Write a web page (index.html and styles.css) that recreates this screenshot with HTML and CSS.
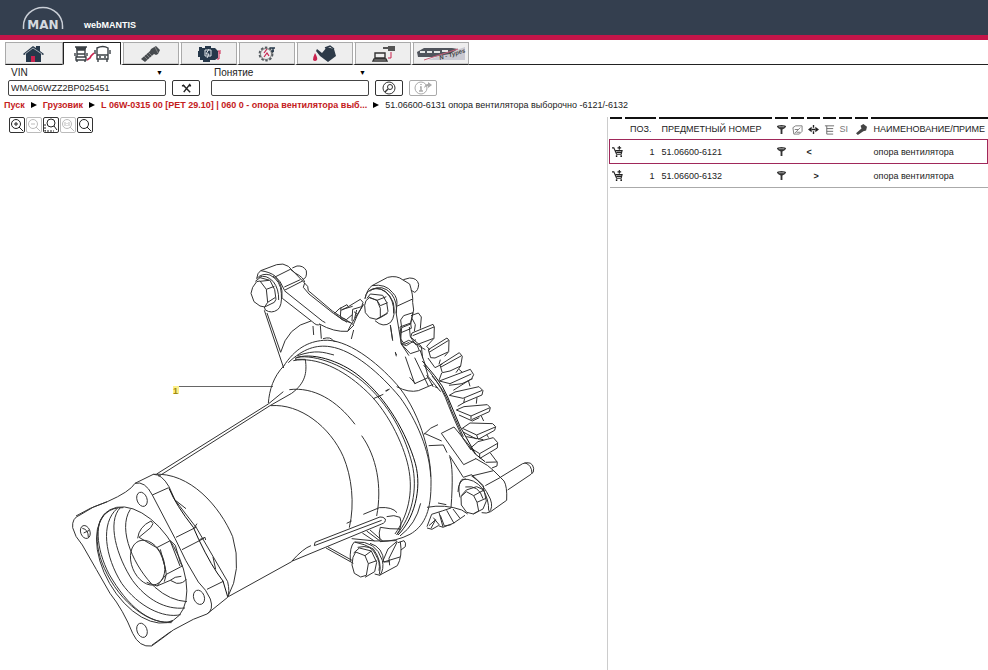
FILE: index.html
```html
<!DOCTYPE html>
<html lang="ru">
<head>
<meta charset="utf-8">
<title>webMANTIS</title>
<link rel="stylesheet" href="styles.css">
</head>
<body>
<header class="brand">
  <svg class="logo" viewBox="0 0 42 25" role="img" aria-label="MAN">
    <path d="M1.500 23V20A19.500 18.500 0 0 1 40.500 20V23" fill="none" stroke="#c9ced6" stroke-width="1.500"/>
    <text x="21" y="23" text-anchor="middle">MAN</text>
  </svg>
  <span class="product">webMANTIS</span>
</header>

<nav class="tabs">
  <button class="tab" aria-label="Home"><svg viewBox="0 0 24 18"><path d="M1 9L11 1l3 2V1h4v5l4 3-1 1-2-1v8H4V9L2 10z" fill="#26384a"/><path d="M9 17v-6h4v6" fill="#c9234f"/><path d="M3 9l8-6 9 6" fill="none" stroke="#fff" stroke-width=".6"/></svg></button>
  <button class="tab active" aria-label="Vehicles"><svg class="wide" viewBox="0 0 38 18"><g fill="none" stroke="#3b4146" stroke-width="1.400"><path d="M2 2h12M3 3.500h10M4 5h8v7H4zM4 9h8M2 8v3M14 8v3M3 12h10v3H3zM4 15v2M12 15v2"/><path d="M24 3Q30 0 35 3v11H24zM24 10h11M22 5v4M37 5v4M25 14v3M34 14v3M26 12h2M31 12h2"/></g><path d="M14 15l3-2 1-2 3-3" stroke="#c9234f" stroke-width="1.700" fill="none"/></svg></button>
  <button class="tab" aria-label="Parts"><svg viewBox="0 0 24 18"><path d="M12 4l5-3 4 4-2 4-2 1-2-1-9 8-4-3 9-8z" fill="#474b4f"/><path d="M5 11l4 4M7 9l4 4M9 7l4 4M16 2l3 6" stroke="#aaa" stroke-width=".6"/></svg></button>
  <button class="tab" aria-label="Units"><svg viewBox="0 0 24 18"><path d="M2 2h3v1h3V1h6v2h4l3 3v7l-3 2h-5v2H6v-2H3v-3H1V6h1z" fill="#26384a"/><path d="M8 5h6v6H8zM12 4l-3 5h3l-2 4" fill="none" stroke="#dfe4e8"/><path d="M21 6h1v8h-2M23 5v4" stroke="#c9234f" fill="none"/></svg></button>
  <button class="tab" aria-label="Service"><svg viewBox="0 0 24 18"><circle cx="11" cy="9" r="6.500" fill="none" stroke="#555b60" stroke-width="1.800" stroke-dasharray="2.500 1.600"/><circle cx="11" cy="9" r="5.500" fill="none" stroke="#666" stroke-width=".8"/><path d="M12 4l-3 4M9 12l3-4 2 3" stroke="#c9234f" stroke-width="1.200" fill="none"/><path d="M15 3h5M16 6h3M18 3v4" stroke="#26384a" stroke-width="1.400"/></svg></button>
  <button class="tab" aria-label="Fluids"><svg viewBox="0 0 24 18"><path d="M4 4l5 4 5-6 7 2 2 7-8 6-8-6-4-5z" fill="#2d3a48"/><path d="M12 3l5-2 4 3" fill="none" stroke="#2d3a48" stroke-width="1.400"/><path d="M2 8q3 5 2 7-2 2-4 0 0-3 2-7z" fill="#c9234f"/></svg></button>
  <button class="tab" aria-label="Diagnostics"><svg viewBox="0 0 24 18"><path d="M4 8h10v5H4zM2 16l1-2h12l1 2z" fill="#eee" stroke="#333" stroke-width="1.400"/><path d="M12 2h5V1h7v5h-7V4h-5z" fill="#555"/><path d="M20 7v6h-3" fill="none" stroke="#c9234f"/></svg></button>
  <button class="tab" aria-label="N-Types"><svg class="bus" viewBox="0 0 50 16"><path d="M12 14L49 1v13z" fill="#c9c9d2"/><path d="M1 6L8 2h28l6 1-8 5-17 3H2z" fill="#50545c"/><path d="M4 6h5M11 6h5M18 6h6M26 5h6" stroke="#e6e6e6" stroke-width="2"/><path d="M8 14L42 3" stroke="#c9607a"/><text x="24" y="14" transform="rotate(-17 24 14)">N - Types</text></svg></button>
  <span class="tab-rest"></span>
</nav>

<form class="search">
  <div class="field">
    <label for="vin">VIN</label><span class="caret">▼</span>
    <input id="vin" type="text" value="WMA06WZZ2BP025451">
  </div>
  <button class="tool" type="button" aria-label="Clear"><svg class="clear" viewBox="0 0 12 12"><path d="M2 2l8 8M10 1L3 10M1 3h3M8 3h3" stroke="#222" stroke-width="1.600"/></svg></button>
  <div class="field second">
    <label for="term">Понятие</label><span class="caret">▼</span>
    <input id="term" type="text">
  </div>
  <button class="tool" type="button" aria-label="Search"><svg viewBox="0 0 14 14"><circle cx="7" cy="7" r="6" fill="none" stroke="#333"/><circle cx="8" cy="6" r="2.500" fill="none" stroke="#333"/><path d="M6 8l-3 3" stroke="#333" stroke-width="1.500"/></svg></button>
  <button class="tool" type="button" aria-label="Info" disabled><svg class="info" viewBox="0 0 18 14"><circle cx="7" cy="7" r="6" fill="none" stroke="#aaa"/><path d="M7 3v1M6 6h1v4M5 10h4" fill="none" stroke="#aaa" stroke-width="1.500"/><path d="M10 7q1-4 4-4V1l4 3-4 3V5q-2 0-4 2z" fill="#aaa"/></svg></button>
</form>

<nav class="crumbs">
  <a href="#">Пуск</a><i></i><a href="#">Грузовик</a><i></i><a href="#">L 06W-0315 00 [PET 29.10] | 060 0 - опора вентилятора выб...</a><i></i><span>51.06600-6131 опора вентилятора выборочно -6121/-6132</span>
</nav>

<main class="work">
  <section class="viewer">
    <div class="zoombar">
      <button aria-label="Zoom in"><svg viewBox="0 0 14 14"><circle cx="6" cy="6" r="4.500"/><path d="M9 9l4 4M4 6h4M6 4v4"/></svg></button>
      <button aria-label="Zoom out" disabled><svg viewBox="0 0 14 14"><circle cx="6" cy="6" r="4.500"/><path d="M9 9l4 4M4 6h4"/></svg></button>
      <button aria-label="Zoom area"><svg viewBox="0 0 14 14"><circle cx="7" cy="5" r="4"/><path d="M10 8l3 4"/><path d="M1 6v7h9" stroke-dasharray="2 1"/></svg></button>
      <button aria-label="Original size" disabled><svg viewBox="0 0 14 14"><circle cx="6" cy="6" r="4.500"/><path d="M9 9l4 4M4 4v4M6 5v1M6 7v1M8 4v4"/></svg></button>
      <button aria-label="Fit"><svg viewBox="0 0 14 14"><circle cx="6" cy="6" r="4.500"/><path d="M9 9l4 4"/></svg></button>
    </div>
    <svg class="drawing" viewBox="0 136 607 534" role="img" aria-label="опора вентилятора">
      <path class="leader" d="M178 386.500H273"/>
      <rect x="173" y="386" width="6" height="8" fill="#fdf08a"/>
      <text x="173" y="394">1</text>

      <!-- upper brackets and bolts -->
      <g transform="translate(240 250) scale(.3333)">
        <path d="M38 112L50 95 60 93 79 118 83 157 74 171 60 168 42 155 33 130zM46 94L60 83 90 91 104 119 108 148 103 157 74 171M60 94l27-3M79 118l24-9M83 157l22-14"/>
        <path d="M50 86Q66 68 90 75Q123 92 124 130Q127 168 113 179Q95 192 76 180L73 171M57 82Q78 72 100 95Q117 117 116 150M99 78Q130 95 126 145"/>
        <path d="M50 86Q52 68 62 62L110 44Q130 38 145 49L185 90 203 109 205 122 277 183Q310 205 333 219M62 62Q90 66 105 78Q122 92 133 120M105 81L151 58M151 58L167 70Q190 82 194 96M133 111L181 89M133 121L188 93M157 54L171 48Q190 46 199 62Q202 84 188 89M194 99L190 112 207 132"/>
        <path d="M127 145L218 216Q232 230 240 222M133 122L247 213 256 218M207 132L280 190 321 217M238 222Q282 247 323 244L333 224 371 163M333 219L340 224M323 244L342 225M340 224L351 198 369 165"/>
        <path d="M73 181L131 354M81 189L122 307Q142 230 213 213M219 228L221 255M241 226L244 266M341 240L334 267M249 266Q273 259 280 273L289 275"/>
        <path d="M283 191L297 177 321 164 325 170 361 148 369 157 365 170 338 178 336 213M303 172L301 202 319 209 337 194M287 193L306 209 331 218M305 179L338 169M342 185L352 193M325 170L304 181M350 180L344 205"/>
        <path d="M378 152L388 143 411 151 421 175 421 203 409 208 389 203 376 188 374 166z"/>
        <path d="M381 145L391 132 428 136 440 157 444 184 439 191 409 208M386 141l25 10 28-11M411 151L421 167 443 158M421 203l22-13"/>
        <path d="M375 146Q379 118 405 116Q441 112 460 158Q468 198 452 217Q430 235 405 212M389 124Q408 105 437 126Q463 148 461 190M394 119Q428 102 454 131Q474 158 468 190"/>
        <path d="M375 146Q381 118 396 107L443 82Q471 75 489 90L509 102Q520 135 518 157L521 180 512 218M396 107Q437 100 458 128Q475 144 470 169L518 147M470 169L469 192 484 282 507 317M490 89L509 84Q532 84 536 103Q535 122 524 127L512 120M451 225L458 272M466 306L469 319"/>
        <path d="M482 210L491 197 519 188 512 222 485 233zM485 234l-3 33 12 16 14-6M508 231L511 260 526 273"/>
      </g>

      <!-- gear rim, right lug and bolt -->
      <g transform="translate(370 290) scale(.3333)">
        <path d="M123 77L145 69 154 81 151 116M126 85L136 104 133 124M90 111L122 99 124 115 93 128zM90 120L94 162 109 167 138 149M94 162L121 191 148 182 140 162 116 151z"/>
        <path d="M126 129L189 103 193 111 192 145 170 169 180 180M126 129L122 142 138 165 191 145M128 137L192 111M166 179L145 167M133 151L154 169 158 205"/>
        <path d="M175 179L231 144 237 151 236 185 224 199M175 179L182 203 195 204 234 186M177 187L236 151M207 223L211 209M174 204L195 233 217 222"/>
        <path d="M210 225L268 188 277 199 272 228 258 248M210 225L217 248 240 243 272 228M213 231L275 197M267 238l10 9M215 249L207 271"/>
        <path d="M208 273L301 238 311 254 305 266 250 301M208 273L240 281 304 252M237 286L276 281 308 266M295 271l5 18"/>
        <path d="M238 316L255 306 327 290 339 302 336 315 281 338M238 316L279 325 337 301M281 338L284 325M263 349L285 336M321 322L319 341"/>
        <path d="M259 360L282 350 352 344 361 353 358 365 305 389M259 360L303 378 360 353M303 378V389M267 375L307 393 328 383M334 378L341 393"/>
        <path d="M277 415L300 399 368 401 377 410 374 421 325 448M277 415L320 435 376 411M320 435L324 447M281 427L319 447M350 434L356 443"/>
        <path d="M302 474L324 455 370 443 383 458 382 474 330 505M302 474L329 491 383 460M329 491V505M289 440L340 449M296 468L317 493M361 489L382 517 381 528 366 534M347 517L382 516"/>
        <path class="heavy" d="M157 213L194 257Q220 288 233 321L270 409 317 493 345 515"/>
        <path d="M161 226Q201 266 226 322Q243 368 278 444L303 480M164 223L175 260 212 305M186 258Q228 304 244 360L280 440M150 180L169 233M194 290l10 4M170 255l20 36"/>
        <path d="M106 200L134 281 174 263M119 262L137 282M134 203L175 288M80 290Q116 309 145 302L190 283M48 304L59 297M76 189L80 195M61 105L68 151"/>
        <path d="M161 434Q182 410 204 404M163 430L215 453M176 467L220 465 231 488M214 430L252 411 308 479M214 430L281 524 318 506M316 505L352 526 371 542 305 558M238 496L280 562 305 554M305 554L341 588 339 604M371 542L402 573Q412 589 410 631L362 665Q349 672 335 668M305 558Q340 580 361 627Q371 654 356 667M346 587L390 563"/>
        <path d="M391 562L458 521Q487 511 491 535Q493 548 483 553L413 600M464 518Q486 525 486 551"/>
        <path d="M273 620L289 605 311 617 321 637 326 663 310 672 290 667 274 645z"/>
        <path d="M274 617L289 600 320 590 342 600 349 633 339 657 310 672M311 617L342 600M321 637L348 625M270 622Q261 583 276 568Q313 564 339 598Q357 630 356 662M264 606Q265 572 287 566M286 591Q327 584 339 626"/>
        <path d="M239 500Q252 535 243 654Q220 662 185 673L171 710M204 639L229 644M171 652Q225 642 275 660L293 672M171 714L186 718 205 707 219 712 250 700 285 676M190 683L208 705M207 667L219 711M230 661L252 700M249 657L270 685M177 707L197 689 183 715M211 676L223 708 244 704"/>
      </g>

      <!-- barrel, sealing bands, lower bolt -->
      <g transform="translate(200 340) scale(.3333)">
        <path d="M-130 402L205 192 250 155M-124 409L210 197 275 160M85 770L275 665"/>
        <path d="M212 197C300 190 390 260 430 350C455 410 465 490 448 563M268 149C340 140 410 180 465 253M485 287C530 350 547 440 530 528"/>
        <path d="M205 190C208 150 220 110 252 77M285 58H316C322 100 315 130 275 160"/>
        <path d="M250 80C285 25 325 5 370 1C440 -5 530 65 590 133C650 202 697 330 693 440C692 520 670 560 630 583Q590 604 540 605"/>
        <path d="M265 68C310 25 350 14 390 20C460 30 540 100 600 172C650 240 690 335 692 410"/>
        <path class="heavy" d="M285 55C330 35 420 60 480 110C560 175 620 280 646 370C668 450 640 540 594 585"/>
        <path d="M290 52C350 42 440 80 500 135C580 210 618 300 636 370C655 450 635 530 590 584"/>
        <path d="M280 62C350 48 430 90 490 145C560 205 610 310 625 380C642 460 622 530 585 582M292 47C350 28 370 37 402 45M662 490Q648 552 600 588M520 176L550 163M556 153l10-5"/>
        <path d="M275 664L545 552Q558 548 556 537Q550 530 540 531L345 607 343 617 545 541M275 664Q310 625 333 617M440 550L455 543M490 523L538 503Q577 500 591 518M560 530Q583 523 600 532Q609 558 591 584M540 601Q535 577 541 562M541 562Q569 568 601 567"/>
        <path d="M378 624L460 670M384 621L456 661M455 596L525 603 590 602M487 579L523 603M500 573L541 604M510 570L548 603"/>
      </g>
      <g transform="translate(320 500) scale(.3333)">
        <path d="M99 172L107 156 135 167 145 191 139 226 122 231 103 220 96 195z"/>
        <path d="M101 159L118 144 154 153 170 187 164 215 135 232M135 167L154 153M145 191L170 182M91 185Q88 140 103 126Q134 132 160 147Q188 185 178 223M113 142Q155 132 167 164Q182 188 177 212M105 126Q168 121 187 181Q193 207 180 226L164 222"/>
        <path d="M150 130Q190 142 191 186L240 171M180 225L232 197Q248 169 241 125M190 180L204 147 231 124M209 196L207 175 232 125M234 128L252 122Q259 128 256 140L243 150M191 186L209 185"/>
      </g>

      <!-- front flange -->
      <g transform="translate(60 460) scale(.3333)">
        <path d="M60 165Q35 174 38 203Q44 230 67 255Q110 330 150 400Q190 450 218 520Q238 563 275 558Q310 533 340 510L400 478 441 462Q462 450 451 417Q440 390 415 366Q375 303 345 235L277 105Q255 62 225 70Q210 95 142 125Q100 137 60 165zM48 168L91 145 142 125M275 556L332 515"/>
        <path d="M225 70L280 43Q305 42 327 80L345 120 409 203 503 365Q510 395 503 412L441 462M277 105L326 83M348 232L410 201M366 269L432 235M441 388L490 364"/>
        <path class="heavy" d="M327 85Q348 136 400 202L416 238Q455 320 489 363L503 410"/>
        <path d="M280 43C390 35 480 140 518 230Q548 330 503 412M345 120L378 146M403 203l8-12M418 239l17-7 2 8M459 291L467 328"/>
        <ellipse cx="245" cy="315" rx="111" ry="191" transform="rotate(-30 245 315)"/>
        <path d="M190 143C105 140 94 240 133 325C180 430 275 500 338 484M172 145C120 190 135 290 185 370C235 440 310 476 362 464M181 143C140 185 170 290 218 362C260 418 315 450 375 444M211 148C170 210 225 325 285 382Q330 422 381 425M145 153C100 178 108 266 147 342C205 442 267 490 335 488"/>
        <ellipse cx="263" cy="308" rx="48" ry="70" transform="rotate(-22 263 308)"/>
        <path d="M233 235Q237 200 273 183L279 191 272 203 237 232 290 263 331 242 346 256 361 308 367 318 319 343M290 263Q310 285 319 343L291 378 260 367M301 268L318 334M332 246L360 318M291 378L331 361 350 370Q371 371 379 357M331 361Q344 349 364 349M319 343L313 365"/>
        <ellipse cx="246" cy="118" rx="15" ry="22" transform="rotate(-20 246 118)"/>
        <ellipse cx="76" cy="216" rx="14" ry="20" transform="rotate(-20 76 216)"/>
        <ellipse cx="417" cy="412" rx="16" ry="22" transform="rotate(-20 417 412)"/>
        <ellipse cx="246" cy="511" rx="15" ry="22" transform="rotate(-20 246 511)"/>
        <path d="M67 205q18 3 18 27M71 219l17-8"/>
      </g>
    </svg>
  </section>

  <section class="parts">
    <svg class="defs" aria-hidden="true">
      <symbol id="cart" viewBox="0 0 12 12"><path d="M0 2h2l3 7h5l1-4H4M5 7h6M8 0v4M6 2h4" fill="none" stroke="#222" stroke-width="1.200"/><circle cx="5" cy="11" r="1"/><circle cx="10" cy="11" r="1"/></symbol>
      <symbol id="filter" viewBox="0 0 12 12"><path d="M1 3q0-2 5-2t5 2q-1 2-4 3v5H5V6Q2 5 1 3z" fill="#333"/><path d="M3 3h6" stroke="#aaa"/></symbol>
      <symbol id="leaf" viewBox="0 0 12 12"><path d="M1 4l3-2h7v6l-3 3H2zM3 10l6-6M3 6h4M5 9h4" fill="none" stroke="#777"/></symbol>
      <symbol id="sides" viewBox="0 0 12 12"><path d="M0 6l4-3v6zM12 6L8 3v6z" fill="#222"/><path d="M4 6h4M6 1v3M6 8v3" stroke="#222" stroke-width="1.500"/></symbol>
      <symbol id="list" viewBox="0 0 12 12"><path d="M1 2h10M3 5h7M3 8h7M3 11h7M3 2v9" fill="none" stroke="#666"/></symbol>
      <symbol id="bolt" viewBox="0 0 12 12"><path d="M5 2l3-2 4 3-1 4-3 1-6 4-2-2 6-5z" fill="#444"/></symbol>
    </svg>
    <table>
      <colgroup><col class="c-cart"><col class="c-pos"><col class="c-num"><col class="c-ico"><col class="c-ico"><col class="c-ico"><col class="c-ico"><col class="c-ico"><col class="c-ico"><col></colgroup>
      <thead><tr>
        <th><span></span></th><th class="right"><span>ПОЗ.</span></th><th><span>ПРЕДМЕТНЫЙ НОМЕР</span></th>
        <th><span><svg><use href="#filter"/></svg></span></th><th><span><svg><use href="#leaf"/></svg></span></th><th><span><svg><use href="#sides"/></svg></span></th><th><span><svg><use href="#list"/></svg></span></th><th class="si"><span>SI</span></th><th><span><svg><use href="#bolt"/></svg></span></th>
        <th><span>НАИМЕНОВАНИЕ/ПРИМЕ</span></th>
      </tr></thead>
      <tbody>
        <tr class="selected"><td><svg><use href="#cart"/></svg></td><td class="right">1</td><td>51.06600-6121</td><td><svg><use href="#filter"/></svg></td><td></td><td class="side">&lt;</td><td></td><td></td><td></td><td>опора вентилятора</td></tr>
        <tr><td><svg><use href="#cart"/></svg></td><td class="right">1</td><td>51.06600-6132</td><td><svg><use href="#filter"/></svg></td><td></td><td class="side end">&gt;</td><td></td><td></td><td></td><td>опора вентилятора</td></tr>
      </tbody>
    </table>
  </section>
</main>
</body>
</html>
```
FILE: styles.css
```css
* { box-sizing: border-box; }
body {
  margin: 0;
  min-height: 100vh;
  display: flex;
  flex-direction: column;
  overflow: hidden;
  background: #fff;
  color: #222;
  font: 9px/12px "Liberation Sans", Arial, sans-serif;
}
button, input { font: inherit; color: inherit; margin: 0; }
svg { display: block; }

.brand {
  display: flex;
  align-items: flex-end;
  gap: 20px;
  height: 40px;
  padding: 0 22px 4px;
  background: #343f4f;
  border-bottom: 5px solid #c41549;
}
.logo { width: 42px; height: 25px; }
.logo text { font: bold 12px "DejaVu Sans", sans-serif; fill: #d5d9df; }
.product { color: #fff; font-weight: bold; }

.tabs { display: flex; padding: 2px 0 0 5px; }
.tab {
  width: 58px;
  height: 23px;
  padding: 0;
  display: grid;
  place-items: center;
  background: #eee;
  background-clip: padding-box;
  border: 1px solid #aaa;
  border-bottom: 1px solid #222;
  box-shadow: inset 0 -1px #ccc;
}
.tab + .tab { border-left: 2px solid #fff; box-shadow: inset 1px 0 #aaa, inset 0 -1px #ccc; }
.tab + .tab.active { background: #fff; border: 1px solid #222; border-bottom-color: #fff; box-shadow: none; }
.tab svg { width: 24px; height: 18px; }
.tab svg.wide { width: 38px; }
.tab svg.bus { width: 50px; height: 16px; }
.bus text { font: italic bold 6px "Liberation Sans", Arial, sans-serif; fill: #444; }
.tab-rest { flex: 1; border-bottom: 1px solid #222; }

.search { display: flex; align-items: flex-end; gap: 6px; padding: 1px 8px 0; }
.field { display: grid; grid-template-columns: 1fr auto; width: 158px; row-gap: 1px; padding-top: 1px; }
.field.second { margin-left: 5px; }
.field label { padding-left: 3px; font-size: 10px; }
.caret { font-size: 7px; color: #000; padding-right: 3px; }
.field input {
  grid-column: 1 / -1;
  width: 100%;
  height: 16px;
  padding: 0 2px;
  border: 1px solid #444;
  border-radius: 2px;
  background: #fff;
}
.tool {
  width: 28px;
  height: 16px;
  padding: 0;
  display: grid;
  place-items: center;
  background: #fff;
  border: 1px solid #333;
  border-radius: 2px;
}
.tool:disabled { border-color: #aaa; }
.tool svg { width: 14px; height: 14px; }
.tool svg.clear { width: 11px; height: 11px; }
.tool svg.info { width: 18px; }

.crumbs { display: flex; align-items: center; padding: 3px 4px 0; white-space: nowrap; }
.crumbs a { color: #c4201c; font-weight: bold; text-decoration: none; }
.crumbs i {
  margin: 0 6px;
  border-left: 6px solid #000;
  border-top: 3px solid transparent;
  border-bottom: 3px solid transparent;
}

.work { flex: 1; display: grid; grid-template-columns: minmax(0, 607fr) minmax(0, 381fr); padding-top: 6px; }
.zoombar { display: flex; gap: 1px; padding: 0 9px 3px; }
.zoombar button {
  width: 16px;
  height: 16px;
  padding: 0;
  display: grid;
  place-items: center;
  background: #fff;
  border: 1px solid #333;
  border-radius: 2px;
}
.zoombar svg { width: 14px; height: 14px; fill: none; stroke: #222; }
.zoombar button:disabled { border-color: #bbb; }
.zoombar button:disabled svg { stroke: #bbb; }

.drawing { width: 100%; height: auto; }
.drawing path, .drawing ellipse { fill: none; stroke: #333; stroke-width: 1; vector-effect: non-scaling-stroke; }
.drawing .heavy { stroke: #111; }
.drawing .leader { stroke: #666; }
.drawing text { font: bold 9px "Liberation Sans", Arial, sans-serif; fill: #a08a10; }

.parts { border-left: 1px solid #ccc; padding-left: 1px; overflow: hidden; }
.defs { width: 0; height: 0; position: absolute; }
table { width: 100%; table-layout: fixed; border-collapse: collapse; white-space: nowrap; }
.c-cart { width: 15px; }
.c-pos { width: 34px; }
.c-num { width: 116px; }
.c-ico { width: 16px; }
th { padding: 0 3px 0 0; font-weight: normal; text-align: left; }
th:last-child { padding-right: 0; }
th span { display: flex; align-items: center; height: 22px; padding-left: 3px; border-top: 2px solid #111; }
th.right span { justify-content: flex-end; padding: 0 4px 0 0; }
th svg { width: 11px; height: 11px; flex: none; }
th:has(svg) span, th.si span { padding-left: 1px; }
.si { color: #777; }
td { height: 24px; padding: 0 3px; }
td svg { width: 11px; height: 11px; }
td:first-child { padding: 0 2px; }
td:nth-child(4) { padding: 0 1px; }
.right { text-align: right; }
td.right { padding-right: 4px; }
td.side { font-weight: bold; padding: 0; }
td.end { padding-left: 7px; }
tbody tr { border-bottom: 1px solid #aaa; }
tbody tr.selected { border: 1px solid #a0285a; }
```
